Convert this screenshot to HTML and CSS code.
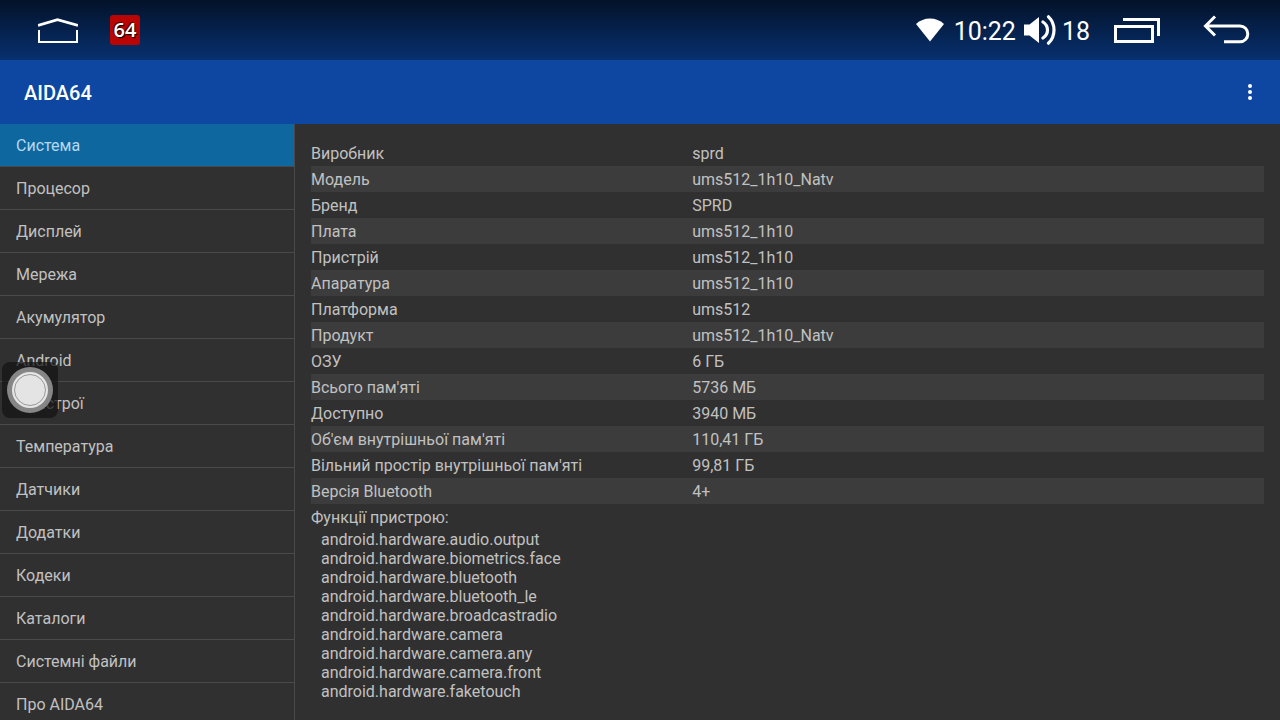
FILE: index.html
```html
<!DOCTYPE html>
<html lang="uk">
<head>
<meta charset="utf-8">
<meta name="viewport" content="width=device-width, initial-scale=1">
<title>AIDA64</title>
<link rel="stylesheet" href="styles.css">
</head>
<body>
<header class="status-bar">
  <button class="icon-button" type="button" aria-label="Home">
    <svg width="40" height="28" viewBox="0 -2 40 28" fill="none" stroke="#fff"><path stroke-width="2.8" d="M0 7.4 19.5 1.600 40 7.4"/><path stroke-width="2" d="M1 12v12.500M39 12v12.500M0 24h40"/></svg>
  </button>
  <span class="app-badge">64</span>
  <div class="status-info">
    <svg width="28" height="24" viewBox="0 0 28 24" fill="#fff" aria-hidden="true"><path d="M0 6Q6 .5 14 .5T28 6L14 23.500z"/></svg>
    <span class="clock">10:22</span>
    <svg width="32" height="30" viewBox="0 0 32 30" aria-hidden="true"><path fill="#fff" d="M0 9.500h5.500L15 2v26l-9.500-7.500H0z"/><path fill="none" stroke="#fff" stroke-width="3.200" stroke-linecap="round" d="M19 7q4.500 3 4.500 8T19 23M24.500 1.800Q30 7 30 15t-5.500 13.200"/></svg>
    <span class="volume">18</span>
  </div>
  <button class="icon-button recents" type="button" aria-label="Recent apps">
    <svg width="46" height="28" viewBox="0 -2 46 28" fill="none" stroke="#fff" stroke-width="3"><path d="M9 1.500h35.500V18M1.500 8.500h37v15h-37z"/></svg>
  </button>
  <button class="icon-button" type="button" aria-label="Back">
    <svg width="48" height="30" viewBox="0 0 48 30" fill="none" stroke="#fff" stroke-width="3"><path d="M13 1.500 3.500 11 13 20.500M3.500 11h34.500a7.800 7.900 0 0 1 0 15.800H22"/></svg>
  </button>
</header>
<div class="app-bar">
  <h1 class="app-title">AIDA64</h1>
  <button class="icon-button" type="button" aria-label="More options">
    <svg width="4" height="16" viewBox="0 0 4 16" fill="#fff"><circle cx="2" cy="2" r="2"/><circle cx="2" cy="8" r="2"/><circle cx="2" cy="14" r="2"/></svg>
  </button>
</div>
<div class="content">
  <nav class="sidebar">
    <a class="nav-item selected" href="#" aria-current="page">Система</a>
    <a class="nav-item" href="#">Процесор</a>
    <a class="nav-item" href="#">Дисплей</a>
    <a class="nav-item" href="#">Мережа</a>
    <a class="nav-item" href="#">Акумулятор</a>
    <a class="nav-item" href="#">Android</a>
    <a class="nav-item" href="#">Пристрої</a>
    <a class="nav-item" href="#">Температура</a>
    <a class="nav-item" href="#">Датчики</a>
    <a class="nav-item" href="#">Додатки</a>
    <a class="nav-item" href="#">Кодеки</a>
    <a class="nav-item" href="#">Каталоги</a>
    <a class="nav-item" href="#">Системні файли</a>
    <a class="nav-item" href="#">Про AIDA64</a>
  </nav>
  <main class="details">
    <table class="info">
      <tbody>
        <tr><th scope="row">Виробник</th><td>sprd</td></tr>
        <tr><th scope="row">Модель</th><td>ums512_1h10_Natv</td></tr>
        <tr><th scope="row">Бренд</th><td>SPRD</td></tr>
        <tr><th scope="row">Плата</th><td>ums512_1h10</td></tr>
        <tr><th scope="row">Пристрій</th><td>ums512_1h10</td></tr>
        <tr><th scope="row">Апаратура</th><td>ums512_1h10</td></tr>
        <tr><th scope="row">Платформа</th><td>ums512</td></tr>
        <tr><th scope="row">Продукт</th><td>ums512_1h10_Natv</td></tr>
        <tr><th scope="row">ОЗУ</th><td>6 ГБ</td></tr>
        <tr><th scope="row">Всього пам'яті</th><td>5736 МБ</td></tr>
        <tr><th scope="row">Доступно</th><td>3940 МБ</td></tr>
        <tr><th scope="row">Об'єм внутрішньої пам'яті</th><td>110,41 ГБ</td></tr>
        <tr><th scope="row">Вільний простір внутрішньої пам'яті</th><td>99,81 ГБ</td></tr>
        <tr><th scope="row">Версія Bluetooth</th><td>4+</td></tr>
      </tbody>
    </table>
    <h2 class="features-title">Функції пристрою:</h2>
    <ul class="features">
      <li>android.hardware.audio.output</li>
      <li>android.hardware.biometrics.face</li>
      <li>android.hardware.bluetooth</li>
      <li>android.hardware.bluetooth_le</li>
      <li>android.hardware.broadcastradio</li>
      <li>android.hardware.camera</li>
      <li>android.hardware.camera.any</li>
      <li>android.hardware.camera.front</li>
      <li>android.hardware.faketouch</li>
    </ul>
  </main>
</div>
<button class="assistive" type="button" aria-label="Quick menu">
  <svg width="46" height="46" viewBox="0 0 46 46"><circle cx="23" cy="23" r="23" fill="#868686"/><circle cx="23" cy="23" r="18" fill="#e6e6e6"/><circle cx="23" cy="23" r="15.500" fill="#e4e4e4" stroke="#999" stroke-width="1"/></svg>
</button>
</body>
</html>
```
FILE: styles.css
```css
* {
  box-sizing: border-box;
}

body {
  display: flex;
  flex-direction: column;
  height: 100vh;
  margin: 0;
  overflow: hidden;
  background: #303030;
  color: #c1c1c1;
  font-family: Roboto, "Noto Sans", sans-serif;
  font-size: 16px;
}

svg {
  display: block;
}

.icon-button {
  padding: 0;
  border: 0;
  background: none;
}

.status-bar {
  display: flex;
  flex: none;
  align-items: center;
  height: 60px;
  padding: 0 30px 0 38px;
  background: linear-gradient(#031229, #07306f);
  color: #fff;
}

.app-badge {
  width: 30px;
  margin-left: 32px;
  border-radius: 3px;
  background: #b90504;
  font-family: "Open Sans", sans-serif;
  font-size: 20px;
  font-weight: 600;
  line-height: 30px;
  text-align: center;
  text-shadow: 1px 1px 1px #000, -1px -1px 1px #500;
}

.status-info {
  display: flex;
  align-items: center;
  margin-left: auto;
  font-size: 25px;
}

.clock,
.volume {
  padding-top: 2px;
}

.clock {
  margin: 0 8px 0 10px;
}

.volume {
  margin-left: 6px;
}

.recents {
  margin: 0 42px 0 24px;
}

.app-bar {
  display: flex;
  flex: none;
  align-items: center;
  justify-content: space-between;
  height: 64px;
  padding: 0 28px 0 24px;
  background: #0d47a1;
  color: #fff;
}

.app-title {
  margin: 0;
  padding-top: 2px;
  font-size: 20px;
  font-weight: 500;
}

.content {
  display: flex;
  flex: 1;
  min-height: 0;
}

.sidebar {
  flex: none;
  width: 295px;
  overflow: hidden;
  border-right: 1px solid #4a4a4a;
}

.nav-item {
  display: block;
  padding: 2px 16px 0;
  border-bottom: 1px solid #4a4a4a;
  color: inherit;
  line-height: 40px;
  text-decoration: none;
}

.selected {
  background: #0f67a0;
  color: #b5d8f0;
}

.details {
  flex: 1;
  padding: 16px;
  overflow: hidden;
}

.info {
  width: 100%;
  border-collapse: collapse;
  table-layout: fixed;
}

.info th,
.info td {
  padding: 2px 0 0;
  font-weight: 400;
  line-height: 24px;
  text-align: left;
}

.info th {
  width: 40%;
}

.info tr:nth-child(even) {
  background: #3c3c3c;
}

.features-title {
  margin: 0;
  padding-top: 2px;
  font-size: 16px;
  font-weight: 400;
  line-height: 24px;
}

.features {
  margin: 0;
  padding: 0 0 0 10px;
  line-height: 19px;
  list-style: none;
}

/* Floating button that stays above the app */
.assistive {
  position: fixed;
  top: 362px;
  left: 2px;
  padding: 5px;
  border: 0;
  border-radius: 8px;
  background: rgba(20, 20, 20, 0.74);
}
```
